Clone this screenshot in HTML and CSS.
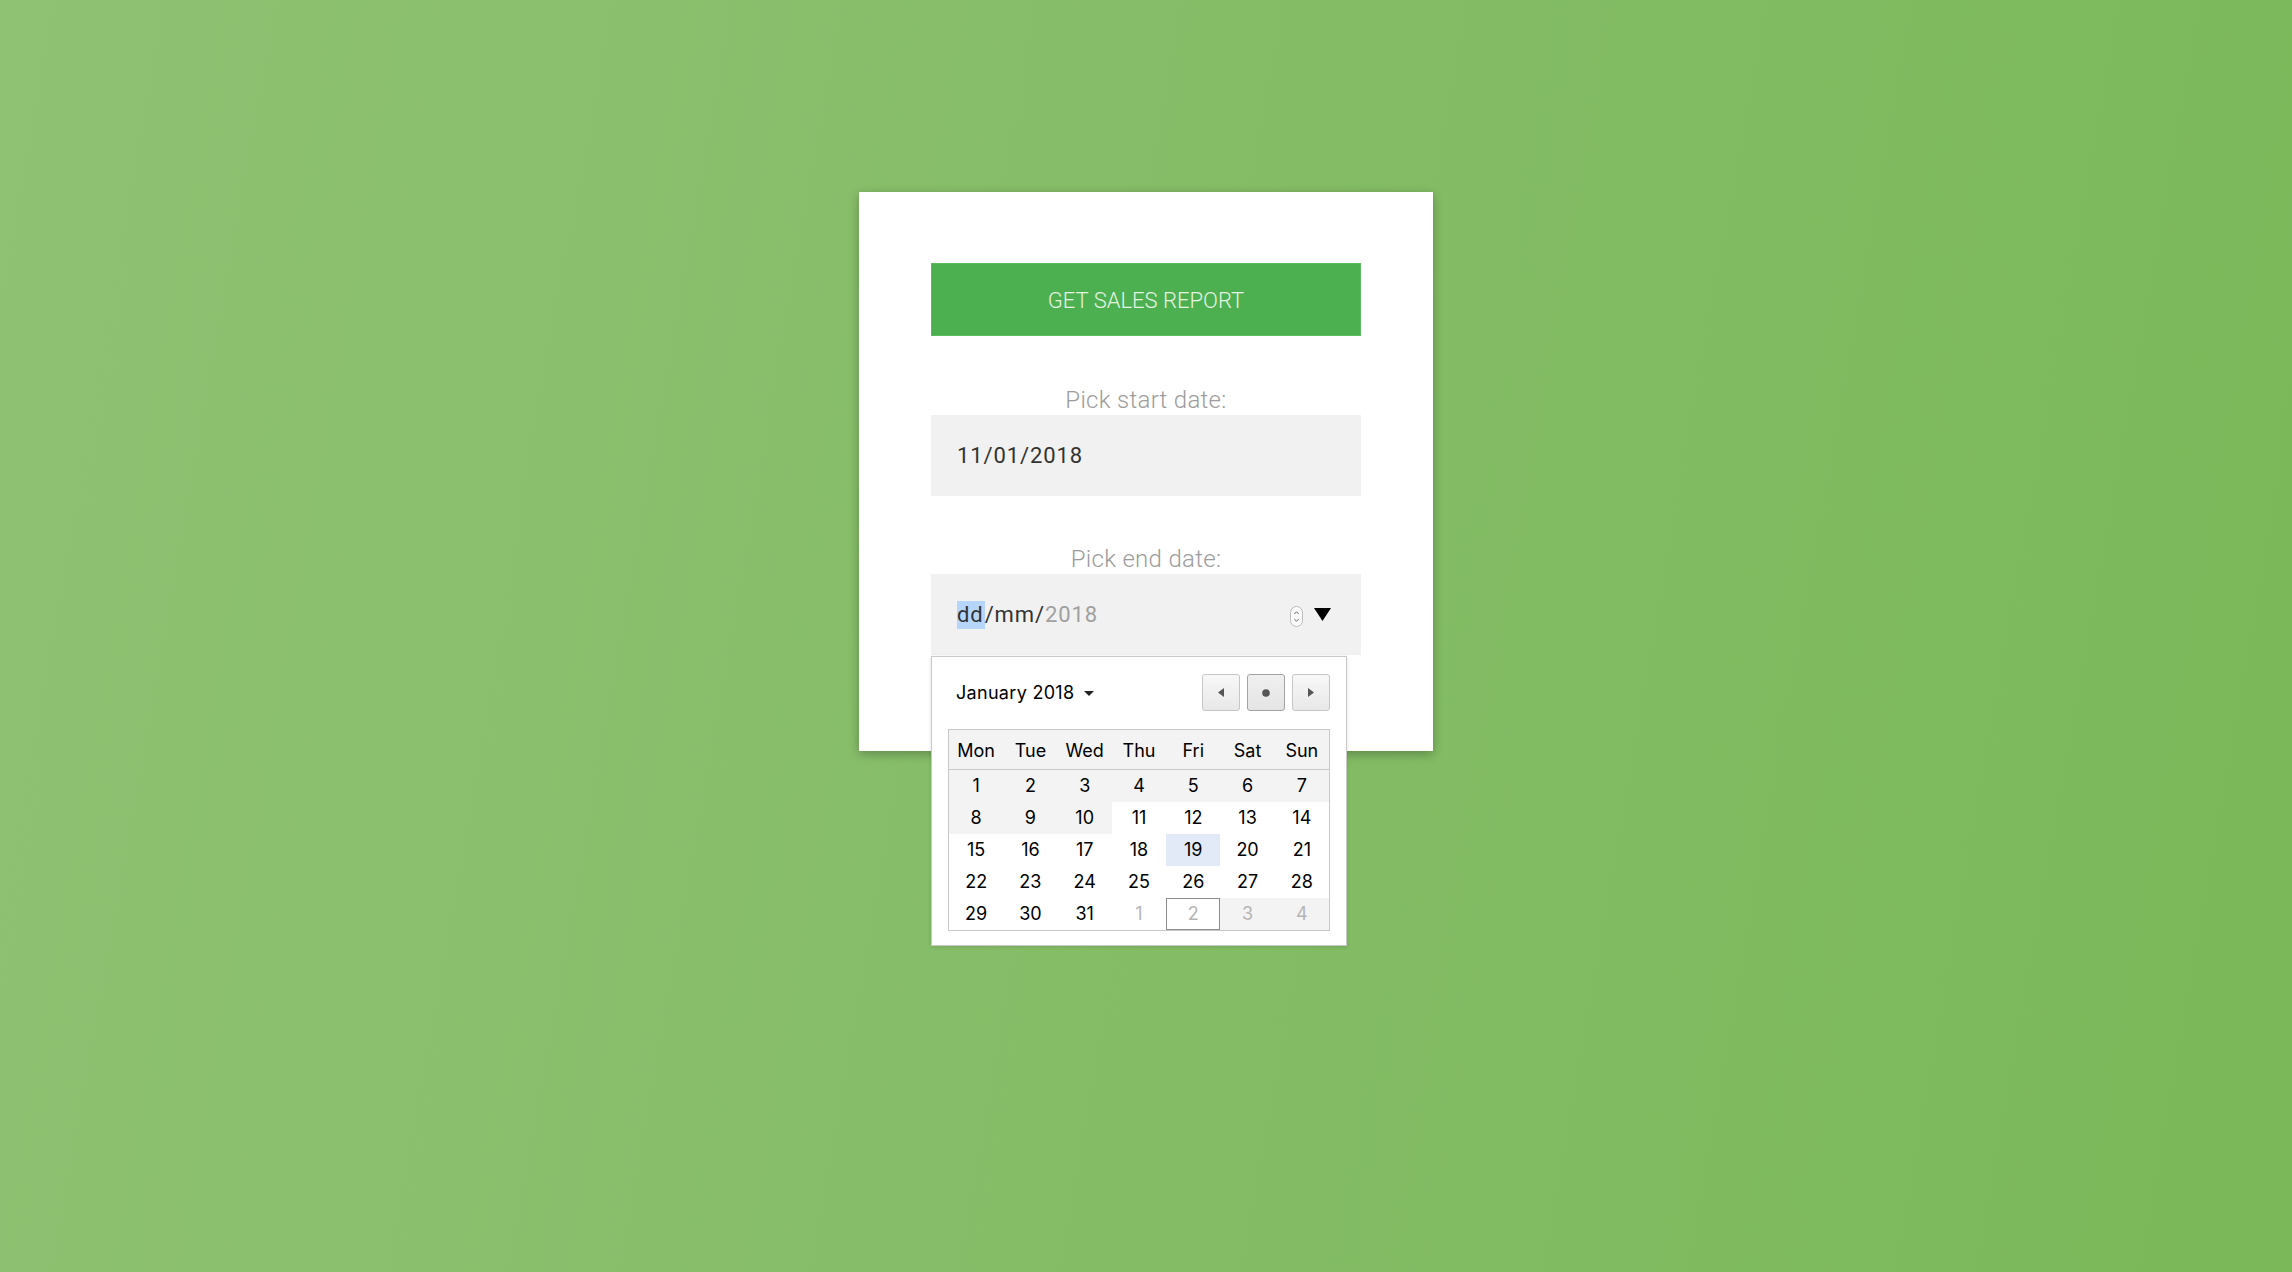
FILE: index.html
```html
<!DOCTYPE html>
<html lang="en">
<head>
<meta charset="utf-8">
<title>Sales report</title>
<link rel="stylesheet" href="styles.css">
</head>
<body>
<main class="page">
  <section class="card">
    <button class="report-btn" type="button">GET SALES REPORT</button>

    <div class="field field-start">
      <label class="field-label">Pick start date:</label>
      <div class="date-input"><span class="val">11/01/2018</span></div>
    </div>

    <div class="field field-end">
      <label class="field-label">Pick end date:</label>
      <div class="date-input">
        <span class="val"><span class="seg-sel">dd</span>/mm/<span class="seg-dim">2018</span></span>
        <span class="controls">
          <svg class="spinner" width="13" height="21" viewBox="0 0 13 21">
            <rect x="0.5" y="0.5" width="12" height="20" rx="6" ry="6" fill="#fbfbfb" stroke="#bdbdbd"/>
            <path d="M4.3 8 L6.5 5.8 L8.7 8" fill="none" stroke="#666" stroke-width="1"/>
            <path d="M4.3 13 L6.5 15.2 L8.7 13" fill="none" stroke="#666" stroke-width="1"/>
          </svg>
          <svg class="drop" width="17" height="13" viewBox="0 0 17 13">
            <polygon points="0,0 17,0 8.5,13" fill="#000"/>
          </svg>
        </span>
      </div>

      <div class="picker">
        <div class="picker-head">
          <div class="month">January 2018
            <svg class="caret" width="10" height="5" viewBox="0 0 10 5"><polygon points="0,0 10,0 5,5" fill="#222"/></svg>
          </div>
          <div class="nav">
            <button class="nav-btn" type="button">
              <svg width="6" height="9" viewBox="0 0 6 9"><polygon points="6,0 6,9 0,4.5" fill="#555"/></svg>
            </button>
            <button class="nav-btn nav-today" type="button">
              <svg width="8" height="8" viewBox="0 0 8 8"><circle cx="4" cy="4" r="3.8" fill="#555"/></svg>
            </button>
            <button class="nav-btn" type="button">
              <svg width="6" height="9" viewBox="0 0 6 9"><polygon points="0,0 0,9 6,4.5" fill="#555"/></svg>
            </button>
          </div>
        </div>

        <div class="cal">
          <div class="cal-head">
            <span>Mon</span><span>Tue</span><span>Wed</span><span>Thu</span><span>Fri</span><span>Sat</span><span>Sun</span>
          </div>
          <div class="cal-body">
            <span class="past">1</span><span class="past">2</span><span class="past">3</span><span class="past">4</span><span class="past">5</span><span class="past">6</span><span class="past">7</span>
            <span class="past">8</span><span class="past">9</span><span class="past">10</span><span>11</span><span>12</span><span>13</span><span>14</span>
            <span>15</span><span>16</span><span>17</span><span>18</span><span class="sel">19</span><span>20</span><span>21</span>
            <span>22</span><span>23</span><span>24</span><span>25</span><span>26</span><span>27</span><span>28</span>
            <span>29</span><span>30</span><span>31</span><span class="other">1</span><span class="other today">2</span><span class="other past">3</span><span class="other past">4</span>
          </div>
        </div>
      </div>
    </div>
  </section>
</main>
</body>
</html>
```

FILE: styles.css
```css
* { box-sizing: border-box; }

html, body {
  margin: 0;
  padding: 0;
}

body {
  min-height: 1272px;
  background: linear-gradient(100deg, #8fc273 0%, #86bd68 45%, #7ab859 100%);
  font-family: Roboto, "Liberation Sans", sans-serif;
}

.page {
  display: flex;
  justify-content: center;
  align-items: flex-start;
  padding-top: 192px;
  min-height: 1272px;
}

.card {
  width: 574px;
  padding: 71px 72px 96px;
  background: #fff;
  box-shadow: 0 3px 10px rgba(0, 0, 0, 0.28);
}

.report-btn {
  display: block;
  width: 100%;
  height: 73px;
  margin: 0;
  padding: 0;
  background: #4caf50;
  border: 1px solid #5bbb5f;
  color: #e4f3e4;
  font-family: Roboto, "Liberation Sans", sans-serif;
  font-weight: 300;
  font-size: 22px;
  padding-top: 2px;
  cursor: pointer;
}

.field { position: relative; }
.field-start { margin-top: 50px; }
.field-end { margin-top: 49px; }

.field-label {
  display: block;
  margin-bottom: 1px;
  text-align: center;
  font-weight: 300;
  font-size: 24px;
  letter-spacing: 0.3px;
  line-height: 28px;
  color: #9c9c9c;
}

.date-input {
  display: flex;
  align-items: center;
  height: 81px;
  padding: 0 30px 0 26px;
  background: #f1f1f1;
  font-size: 22px;
  color: #333;
}

.val {
  line-height: 28px;
  letter-spacing: 0.9px;
}

.seg-sel {
  display: inline-block;
  background: #b5d5fb;
  line-height: 28px;
  padding-right: 1px;
}

.seg-dim { color: #a0a0a0; }

.controls {
  margin-left: auto;
  display: flex;
  align-items: center;
  gap: 11px;
}

.spinner { display: block; margin-top: 3px; }
.drop { display: block; }

/* date picker popup */
.picker {
  position: absolute;
  top: calc(100% + 1px);
  left: 0;
  width: 416px;
  padding: 17px 16px 14px;
  background: #fff;
  border: 1px solid #c9c9c9;
  box-shadow: 0 1px 4px rgba(0, 0, 0, 0.12);
  font-family: Inter, "Liberation Sans", sans-serif;
  z-index: 2;
}

.picker-head {
  display: flex;
  align-items: center;
  justify-content: space-between;
  height: 37px;
  margin-bottom: 18px;
}

.month {
  display: flex;
  align-items: center;
  gap: 10px;
  padding-left: 8px;
  font-size: 18px;
  letter-spacing: 0.3px;
  color: #000;
}

.caret { display: block; margin-top: 2px; }

.nav {
  display: flex;
  gap: 7px;
}

.nav-btn {
  display: flex;
  align-items: center;
  justify-content: center;
  width: 38px;
  height: 37px;
  margin: 0;
  padding: 0;
  border: 1px solid #c6c6c6;
  border-radius: 3px;
  background: linear-gradient(#f8f8f8, #e8e8e8);
}

.nav-today {
  border-color: #a2a2a2;
  background: linear-gradient(#f0f0f0, #e4e4e4);
}

.cal {
  border: 1px solid #c8c8c8;
  font-size: 18px;
  color: #000;
}

.cal-head {
  display: grid;
  grid-template-columns: repeat(7, 1fr);
  height: 40px;
  align-items: center;
  padding-top: 2px;
  background: #f3f3f3;
  border-bottom: 1px solid #c8c8c8;
  text-align: center;
}

.cal-body {
  display: grid;
  grid-template-columns: repeat(7, 1fr);
  grid-auto-rows: 32px;
  text-align: center;
}

.cal-body span {
  display: flex;
  align-items: center;
  justify-content: center;
  padding-bottom: 2px;
}

.cal-body .past { background: #f3f3f3; }
.cal-body .sel { background: #e3eaf7; }
.cal-body .other { color: #b5b5b5; }
.cal-body .today { border: 1px solid #8c8c8c; }
```
